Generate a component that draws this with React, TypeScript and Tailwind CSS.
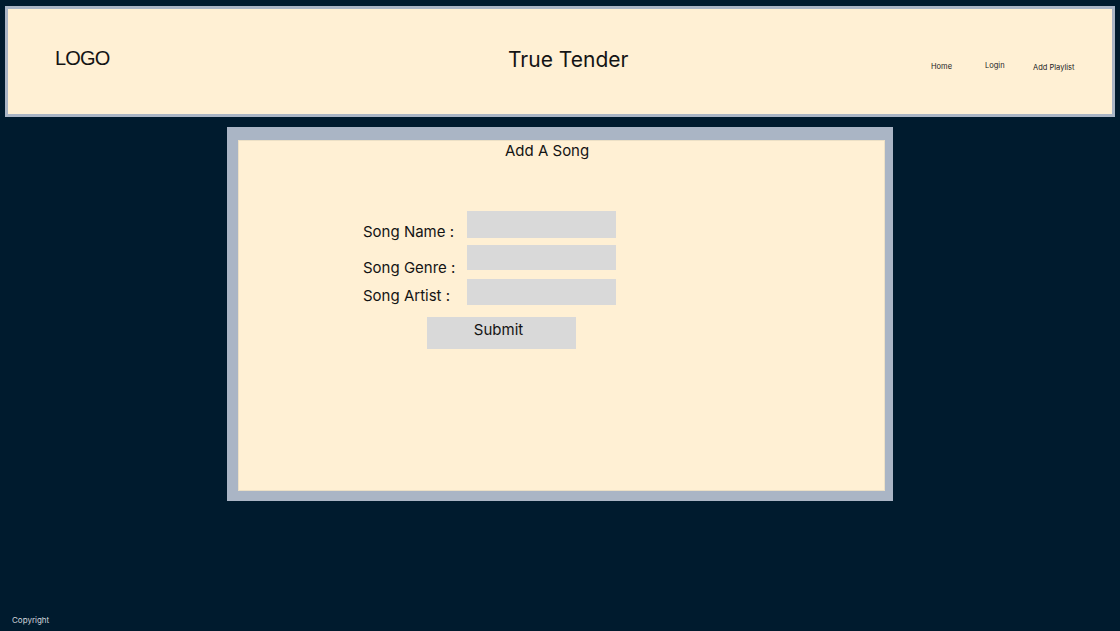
import React from 'react';

const fields: { label: string; rowH: string; labelPt: string; gap: string }[] = [
  { label: 'Song Name :', rowH: 'h-[27px]', labelPt: 'pt-[11px]', gap: 'mt-0' },
  { label: 'Song Genre :', rowH: 'h-[25px]', labelPt: 'pt-[13px]', gap: 'mt-[7px]' },
  { label: 'Song Artist :', rowH: 'h-[26px]', labelPt: 'pt-[7px]', gap: 'mt-[9px]' }
];

const Header: React.FC = () => (
  <div className="px-[5px] pt-[6px]">
    <header className="h-[111px] border-[3px] border-[#aab5c5] bg-[#fff0d4] grid grid-cols-[500px_423px_1fr] text-[#141414]">
      {/* logo */}
      <div className="pl-[47px] pt-[38px]">
        <span className="font-['Liberation_Sans',Arial,sans-serif] text-[20px] leading-[23px] tracking-[-0.8px]">
          LOGO
        </span>
      </div>
      {/* title */}
      <div className="pt-[38px]">
        <h1 className="font-['Inter',sans-serif] text-[21px] leading-[26px]">True Tender</h1>
      </div>
      {/* nav */}
      <nav className="flex items-start pt-[52px] font-['Inter',sans-serif] text-[7.5px] leading-[10px] text-[#222]">
        <a className="w-[54px] mt-[1px]">Home</a>
        <a className="w-[48px]">Login</a>
        <a className="mt-[2px]">Add Playlist</a>
      </nav>
    </header>
  </div>
);

export default function App() {
  return (
    <div className="h-[631px] bg-[#001b2e] flex flex-col overflow-hidden font-['Inter',sans-serif]">
      <Header />

      {/* add song card */}
      <main className="mx-auto mt-[10px] w-[666px] h-[374px] bg-[#aab5c5] pl-[11px] pt-[13px] pr-[8px] pb-[10px]">
        <div className="h-full bg-[#fff0d4] border border-[#ece0c6] text-[#141414]">
          <h2 className="pl-[266px] text-[15px] leading-[20px]">Add A Song</h2>

          <form className="mt-[50px]" onSubmit={(e) => e.preventDefault()}>
            {fields.map((f) => (
              <div key={f.label} className={`flex items-start pl-[124px] ${f.rowH} ${f.gap}`}>
                <label className={`w-[104px] text-[15px] leading-[20px] ${f.labelPt}`}>{f.label}</label>
                <input className={`w-[149px] ${f.rowH} bg-[#d9d9d9] outline-none`} />
              </div>
            ))}
            <div className="pl-[188px] mt-[12px]">
              <button
                type="submit"
                className="w-[149px] h-[32px] bg-[#d9d9d9] flex justify-center items-start pt-[3px] pr-[6px] text-[15px] leading-[20px]"
              >
                Submit
              </button>
            </div>
          </form>
        </div>
      </main>

      <footer className="mt-auto pl-[12px] pb-[6px] text-[8px] leading-[10px] text-[#d2d6dc]">Copyright</footer>
    </div>
  );
}
